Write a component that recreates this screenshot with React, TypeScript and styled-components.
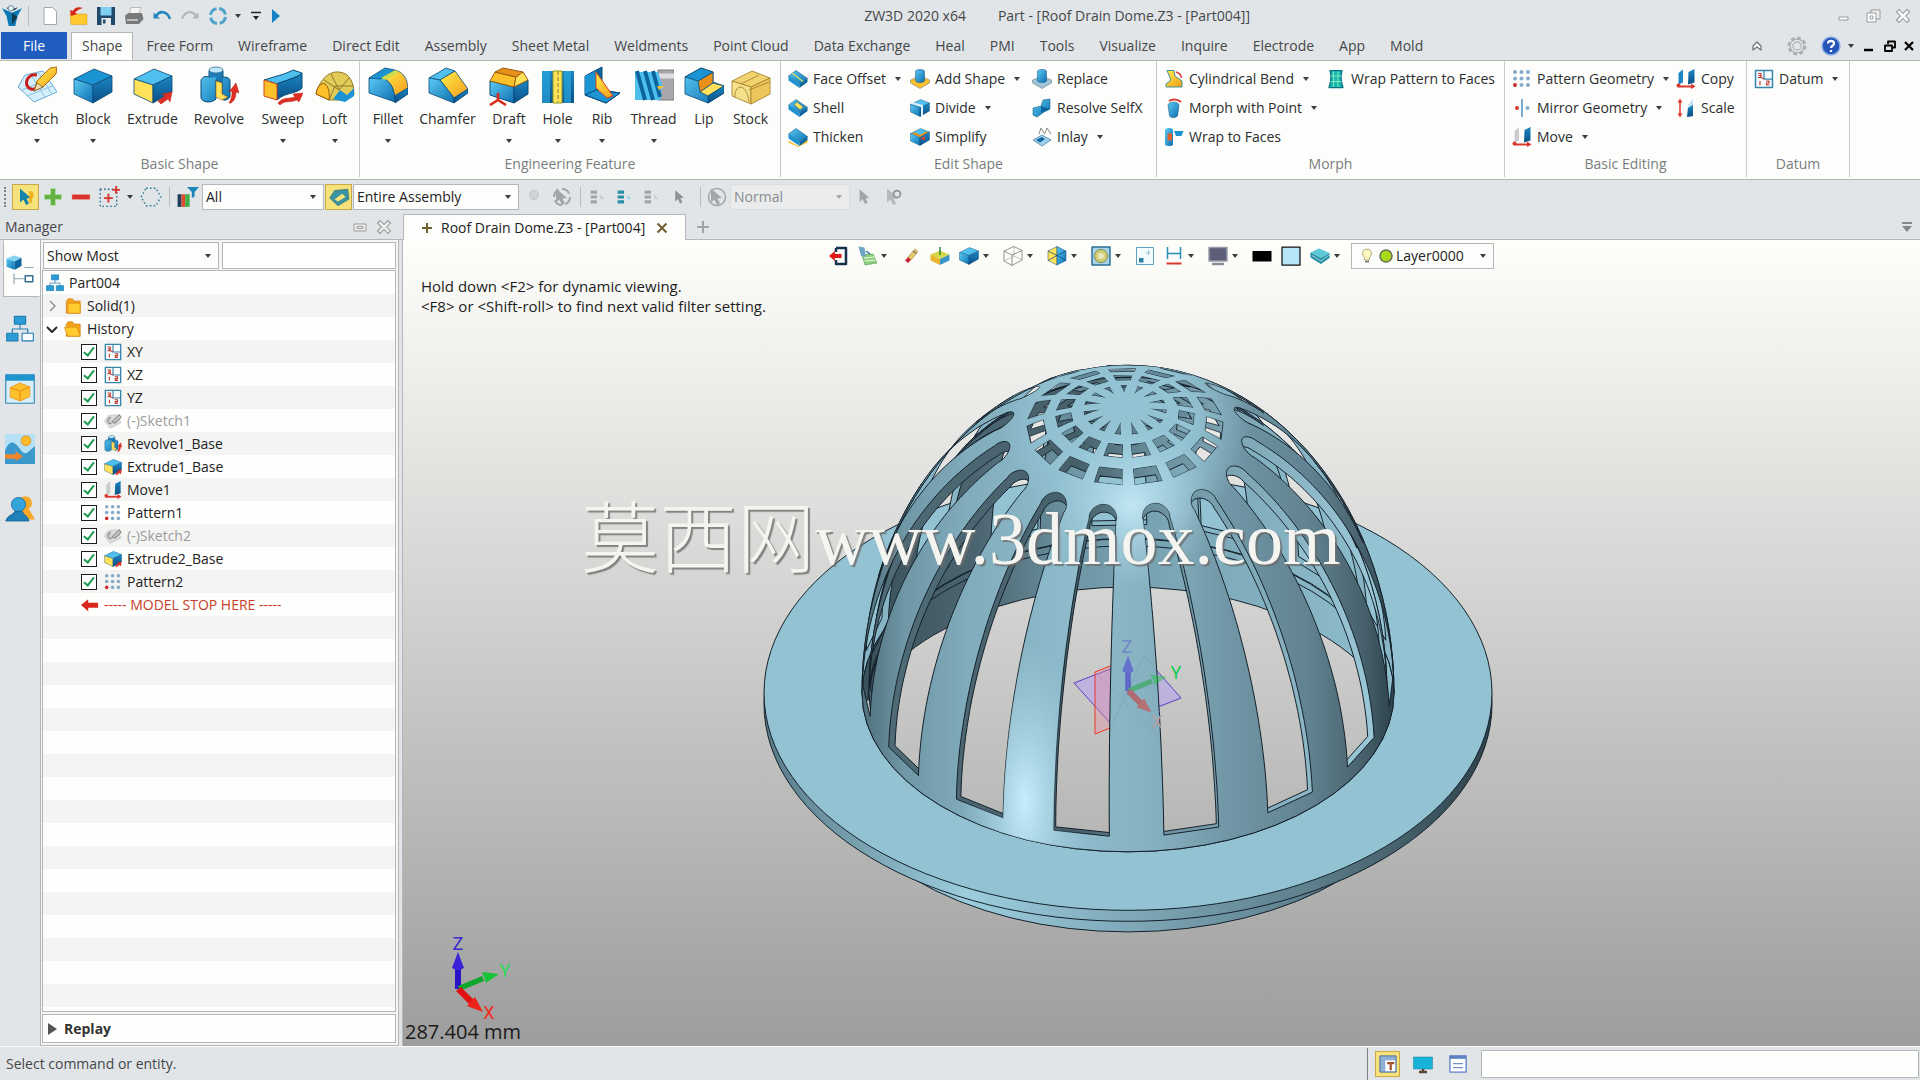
import React from "react";
import styled, { createGlobalStyle, css } from "styled-components";

const UI_FONT = `"Open Sans", "Noto Sans", "Noto Sans CJK SC", sans-serif`;

const GlobalStyle = createGlobalStyle`
  *, *::before, *::after { box-sizing: border-box; }
  body { margin: 0; background: #e2e5e7; color: #2b2d30; font: 14px/20px ${UI_FONT}; }
  button, select, input { font: inherit; color: inherit; }
  button { background: none; border: 0; padding: 0; margin: 0; cursor: pointer; }
`;

/* ---------- shell ---------- */

const Window = styled.div`
  display: flex;
  flex-direction: column;
  height: 100vh;
  background: #e2e5e7;
  overflow: hidden;
`;

const TitleBar = styled.header`
  display: grid;
  grid-template-columns: 859fr auto 666fr;
  align-items: center;
  flex: 0 0 32px;
`;

const QuickAccess = styled.div`
  display: flex;
  align-items: center;
  height: 32px;
`;

const Title = styled.h1`
  display: flex;
  gap: 32px;
  margin: 0;
  font-size: 14px;
  font-weight: 400;
  color: #44474a;
  white-space: nowrap;
`;

const WindowControls = styled.div`
  display: flex;
  justify-content: flex-end;
  gap: 14px;
  padding-right: 9px;
`;

const Cell = styled.button<{ $w: number; $on?: boolean }>`
  display: inline-flex;
  align-items: center;
  justify-content: center;
  flex: none;
  width: ${(p) => p.$w}px;
  height: 26px;
  ${(p) =>
    p.$on &&
    css`
      background: #f6e27a;
      border: 1px solid #c9a84a;
    `}
`;

const Separator = styled.span<{ $after?: number }>`
  flex: none;
  width: 1px;
  height: 20px;
  margin: 0 ${(p) => p.$after ?? 4}px 0 4px;
  background: #b9bcbe;
`;

const ArrowShape = styled.span<{ $dim?: boolean }>`
  display: inline-block;
  flex: none;
  width: 0;
  height: 0;
  border: 3px solid transparent;
  border-top: 4px solid ${(p) => (p.$dim ? "#a5a7a8" : "#3b3d3f")};
  border-bottom: 0;
`;

/* ---------- ribbon ---------- */

const TabRow = styled.nav`
  display: flex;
  flex: 0 0 28px;
  padding-left: 1px;
  border-bottom: 1px solid #b4b7b9;
`;

const FileTab = styled.button`
  width: 66px;
  height: 27px;
  margin-right: 4px;
  background: #1f5dbe;
  color: #fff;
`;

const Tab = styled.button<{ $active?: boolean }>`
  height: 28px;
  margin-right: 1px;
  padding: 0 12px;
  color: #44474a;
  ${(p) =>
    p.$active &&
    css`
      padding: 0 10px;
      background: #fdfefb;
      border: 1px solid #b4b7b9;
      border-bottom-color: #fdfefb;
    `}
`;

const TabTools = styled.div`
  display: flex;
  align-items: center;
  margin-left: auto;
  padding-right: 1px;
`;

const Ribbon = styled.section`
  display: flex;
  flex: 0 0 119px;
  background: #fdfefb;
  border-bottom: 1px solid #b4b7b9;
`;

const Group = styled.section<{ $w: number }>`
  display: flex;
  flex-direction: column;
  justify-content: space-between;
  width: ${(p) => p.$w}px;
  height: 116px;
  border-right: 1px solid #c8cacb;
`;

const GroupName = styled.h2`
  margin: 0;
  padding-bottom: 3px;
  font-size: 14px;
  font-weight: 400;
  text-align: center;
  color: #7a7d80;
`;

const LargeRow = styled.div<{ $pad?: number }>`
  display: flex;
  padding: 5px 0 0 ${(p) => p.$pad ?? 0}px;
`;

const Large = styled.button<{ $w: number }>`
  display: flex;
  flex-direction: column;
  align-items: center;
  width: ${(p) => p.$w}px;
  svg { display: block; }
  span { margin-top: 3px; }
  i { margin-top: 10px; }
`;

const SmallColumns = styled.div<{ $cols: string }>`
  display: grid;
  grid-template-columns: ${(p) => p.$cols};
  padding: 4px 0 0 7px;
`;

const SmallColumn = styled.div`
  display: flex;
  flex-direction: column;
  align-items: flex-start;
`;

const Small = styled.button`
  display: flex;
  align-items: center;
  height: 29px;
  padding-bottom: 2px;
  gap: 5px;
  white-space: nowrap;
  i { margin-left: 4px; }
`;

/* ---------- filter bar ---------- */

const FilterBar = styled.div`
  display: flex;
  align-items: center;
  flex: 0 0 34px;
`;

const Grip = styled.span`
  width: 2px;
  height: 20px;
  margin: 0 6px 0 4px;
  border-left: 2px dotted #7f8284;
`;

const SelectBox = styled.label<{ $w: number; $dim?: boolean; $h?: number }>`
  position: relative;
  display: flex;
  align-items: center;
  flex: none;
  width: ${(p) => p.$w}px;
  height: ${(p) => p.$h ?? 26}px;
  margin: 0 1px;
  background: ${(p) => (p.$dim ? "#e9ebec" : "#fdfefb")};
  border: 1px solid ${(p) => (p.$dim ? "#dcdedf" : "#b4b7b9")};
  color: ${(p) => (p.$dim ? "#8b8d8f" : "#222")};
  > svg { flex: none; margin-left: 4px; }
  > svg:first-child { margin-left: 7px; }
  > i { position: absolute; right: 7px; pointer-events: none; }
`;

const BareSelect = styled.select`
  flex: 1;
  min-width: 0;
  height: 100%;
  padding: 0 18px 0 3px;
  border: 0;
  background: none;
  appearance: none;
  outline: 0;
  opacity: 1;
`;

/* ---------- body ---------- */

const Body = styled.main`
  display: flex;
  flex: 1;
  min-height: 0;
`;

const Manager = styled.aside`
  display: flex;
  flex-direction: column;
  flex: 0 0 402px;
  min-width: 0;
`;

const ManagerHead = styled.div`
  display: flex;
  align-items: center;
  gap: 10px;
  flex: 0 0 25px;
  min-height: 0;
  padding: 0 11px 0 5px;
  h2 { flex: 1; margin: 0; font-size: 14px; font-weight: 400; color: #44474a; }
`;

const ManagerBody = styled.div`
  display: flex;
  flex: 1;
  min-height: 0;
  border-top: 1px solid #b4b7b9;
`;

const SideTabs = styled.nav`
  display: flex;
  flex-direction: column;
  gap: 3px;
  flex: 0 0 40px;
  padding-left: 3px;
`;

const SideTab = styled.button<{ $active?: boolean }>`
  display: flex;
  align-items: center;
  justify-content: center;
  height: 57px;
  padding-right: 4px;
  border: 1px solid transparent;
  ${(p) => p.$active && css`background: #fdfefb; border-color: #fdfefb #fdfefb #b4b7b9 #b4b7b9;`}
`;

const Panel = styled.div`
  display: flex;
  flex-direction: column;
  flex: 1;
  min-width: 0;
  padding: 2px 2px 2px 1px;
  border: 1px solid #b4b7b9;
  border-top: 0;
  background: #f4f5f4;
  margin-right: 3px;
`;

const PanelFilters = styled.div`
  display: flex;
  gap: 2px;
  height: 27px;
  margin-bottom: 1px;
  input { flex: 1; min-width: 0; background: #fff; border: 1px solid #b4b7b9; outline: 0; }
`;

const Tree = styled.ul`
  flex: 1;
  min-height: 0;
  margin: 0;
  padding: 0;
  list-style: none;
  overflow: hidden;
  color: #222;
  border: 1px solid #b4b7b9;
  background: repeating-linear-gradient(#fefefc 0 23px, #f4f4f2 23px 46px);
`;

const TreeRow = styled.li<{ $indent: number; $tone?: string }>`
  display: flex;
  align-items: center;
  gap: 5px;
  height: 23px;
  padding-left: ${(p) => p.$indent}px;
  color: ${(p) => p.$tone ?? "inherit"};
  label { display: flex; align-items: center; gap: 5px; }
  input { margin-right: 2px; }
  svg { flex: none; }
`;

const Check = styled.input`
  appearance: none;
  position: relative;
  width: 16px;
  height: 16px;
  margin: 0;
  background: #fff;
  border: 1px solid #1d1d1d;
  &:checked::after {
    content: "";
    position: absolute;
    left: 4px;
    top: 0;
    width: 6px;
    height: 11px;
    border: solid #1d9a50;
    border-width: 0 2px 2px 0;
    transform: rotate(38deg);
  }
`;

const Replay = styled.button`
  display: flex;
  align-items: center;
  gap: 6px;
  height: 29px;
  margin-top: 2px;
  padding-left: 3px;
  background: #fdfefb;
  border: 1px solid #b4b7b9;
  font-weight: 700;
  color: #333;
`;

const Work = styled.section`
  display: flex;
  flex-direction: column;
  flex: 1;
  min-width: 0;
`;

const DocTabs = styled.div`
  display: flex;
  align-items: center;
  flex: 0 0 26px;
  min-height: 0;
  padding-right: 6px;
  border-bottom: 1px solid #b4b7b9;
`;

const DocTab = styled.div`
  display: flex;
  align-items: center;
  gap: 8px;
  align-self: stretch;
  margin: 0 9px -1px 1px;
  padding: 0 17px 0 17px;
  background: #fdfefb;
  border: 1px solid #b4b7b9;
  border-bottom: 0;
  color: #222;
  button { display: flex; margin-left: 3px; }
`;

const Spacer = styled.span`
  flex: 1;
`;

const Viewport = styled.div`
  position: relative;
  flex: 1;
  min-height: 0;
  border-left: 1px solid #b4b7b9;
  background: linear-gradient(#fefefb, #9d9d9d);
  overflow: hidden;
`;

const Scene = styled.svg`
  position: absolute;
  inset: 0;
  width: 100%;
  height: 100%;
`;

const ViewTools = styled.div`
  position: relative;
  display: flex;
  align-items: center;
  justify-content: center;
  padding: 3px 4px 0 0;
`;

const ViewTool = styled.button<{ $menu?: boolean }>`
  display: flex;
  align-items: center;
  width: ${(p) => (p.$menu ? 44 : 29)}px;
  height: 26px;
  svg { flex: none; margin: 0 4px 0 4px; }
`;

const Hints = styled.p`
  position: relative;
  margin: 7px 0 0 18px;
  font-size: 15px;
  color: #1d1d1d;
`;

const Watermark = styled.div`
  position: absolute;
  left: 178px;
  top: 243px;
  display: flex;
  align-items: flex-start;
  color: #f4f4f0;
  text-shadow: 2px 2px 1px #6d6d6dcc;
  font: 300 78px/100px "Noto Sans CJK SC", sans-serif;
  span { font: 74px/112px "Liberation Serif", serif; }
`;

const Measure = styled.output`
  position: absolute;
  left: 2px;
  bottom: 0;
  font-size: 20px;
  line-height: 28px;
  color: #1a1a1a;
`;

const StatusBar = styled.footer`
  display: flex;
  align-items: center;
  flex: 0 0 34px;
  padding-left: 6px;
  border-top: 1px solid #fafafa;
  color: #44474a;
  > p { flex: 1; margin: 0; }
`;

const StatusTools = styled.div`
  display: flex;
  align-items: center;
  gap: 10px;
  height: 32px;
  padding: 0 11px 0 7px;
  border-left: 1px solid #7d8082;
`;

const CommandLine = styled.input`
  flex: none;
  width: 438px;
  height: 28px;
  margin-right: 1px;
  background: #fdfefb;
  border: 1px solid #b4b7b9;
  outline: 0;
`;

/* ---------- icons ---------- */

const B = { hi: "#4fc0ee", mid: "#1c93d2", lo: "#0d659f", ink: "#0b4a78" };
const Y = { hi: "#ffe25a", mid: "#fbc02a", lo: "#e8901a", ink: "#9b5a10" };

const Svg = ({ s = 20, vb = 40, children }: { s?: number; vb?: number; children: React.ReactNode }) => (
  <svg width={s} height={s} viewBox={`0 0 ${vb} ${vb}`} aria-hidden="true" strokeLinejoin="round">
    {children}
  </svg>
);

const DefsHolder = styled.svg`
  display: block;
  width: 0;
  height: 0;
`;

const Defs = () => (
  <DefsHolder aria-hidden="true">
    <defs>
      <linearGradient id="bl" x1="0" y1="0" x2="1" y2="1">
        <stop offset="0" stopColor="#5ccbf4" />
        <stop offset="1" stopColor="#0c6fb0" />
      </linearGradient>
      <linearGradient id="bd" x1="0" y1="0" x2="0" y2="1">
        <stop offset="0" stopColor="#1b86c4" />
        <stop offset="1" stopColor="#0a4f85" />
      </linearGradient>
      <linearGradient id="go" x1="0" y1="0" x2="1" y2="1">
        <stop offset="0" stopColor="#fff04a" />
        <stop offset="1" stopColor="#f59a1b" />
      </linearGradient>
    </defs>
  </DefsHolder>
);

type Fills = { top?: string; left?: string; right?: string };
const CubeShape = ({ top = B.hi, left = "url(#bl)", right = "url(#bd)" }: Fills) => (
  <g stroke={B.ink} strokeWidth=".8">
    <path d="M1 13 21 3 39 10 20 19Z" fill={top} />
    <path d="M1 13 20 19V37L1 28Z" fill={left} />
    <path d="M20 19 39 10V26L20 37Z" fill={right} />
  </g>
);

const RedArrow = ({ d }: { d: string }) => <path d={d} fill="#e02f22" stroke="#b01d14" strokeWidth=".5" />;

const sketchArt = (
  <>
    <path d="M1 21 8 9 26 5 40 26 17 36Z" fill="#d4eefb" stroke="#6aa9d6" />
    <path d="M5 24 30 14M10 30 35 20M14 9 28 31M22 7 34 27" stroke="#8cc4e6" fill="none" />
    <path d="M20 9C9 7 6 21 14 23 18 24 20 22 22 21" fill="none" stroke="#c81e1e" strokeWidth="3" />
    <path d="M20 15 33 2 40 1 39 8 26 21 17 25Z" fill="url(#go)" stroke="#b06a10" />
    <path d="m17 25 3-8 6 4z" fill="#f8dcb0" stroke="#5a3a14" strokeWidth=".6" />
  </>
);
const extrudeArt = (
  <>
    <CubeShape left={Y.hi} />
    <RedArrow d="M25 35 32 30 29 28 39 26 37 36 35 33 28 38Z" />
  </>
);
const revolveArt = (
  <>
    <path d="M2 14C4 10 8 10 10 11V5C12 1 22 1 24 5V11C28 11 31 12 31 15V31C28 35 23 35 23 32V16L17 14V33C12 38 3 36 2 32Z" fill="url(#bl)" stroke={B.ink} />
    <path d="M10 5C12 8 22 8 24 5V18L17 15V11L10 12Z" fill={B.lo} opacity=".65" />
    <ellipse cx="17" cy="4" rx="7" ry="3" fill="#bfe9fa" stroke={B.ink} strokeWidth=".6" />
    <path d="M17 15 23 17V28L29 31 23 34 17 31Z" fill={Y.hi} stroke={Y.ink} strokeWidth=".6" />
    <RedArrow d="M30 37C33 32 33 29 33 25L30 26 37 17 40 27 37 26C37 32 35 35 32 37Z" />
  </>
);
const sweepArt = (
  <>
    <path d="M1 14 14 10C22 8 26 6 30 4L39 7C38 9 30 12 25 14L14 18Z" fill={B.hi} stroke={B.ink} />
    <path d="M14 18C22 14 36 12 39 7V22C34 28 22 26 14 34Z" fill="url(#bd)" stroke={B.ink} />
    <path d="M1 14 14 18V34L1 30Z" fill={Y.mid} stroke="#d1421c" />
    <RedArrow d="M15 37C20 31 26 33 32 31L30 28 40 27 36 36 34 34C27 37 22 34 17 39Z" />
  </>
);
const loftArt = (
  <>
    <path d="M1 28C4 16 12 5 24 6 35 7 39 17 39 29L30 34H14Z" fill="#e3cb58" stroke="#8d7a2a" />
    <path d="M9 14 24 24 34 12M14 34 20 20 39 20M16 8 24 24" fill="none" stroke="#8d7a2a" />
    <path d="M18 33 25 24 32 29 39 22V30L30 36Z" fill={B.mid} />
    <path d="M1 28C2 20 7 16 10 18 14 21 15 29 14 34Z" fill={Y.mid} stroke={Y.ink} />
  </>
);
const filletArt = (
  <g stroke={B.ink} strokeWidth=".8">
    <path d="M13 13 27 4C35 6 39 12 40 22L26 30C26 22 22 15 13 11Z" fill="url(#go)" />
    <path d="M1 12C16 8 27 16 27 36L1 27Z" fill="url(#bl)" />
    <path d="M27 30 40 22V28L27 37Z" fill="url(#bd)" />
    <path d="M1 12 17 2 27 4 13 13Z" fill={B.mid} />
    <path d="M13 12 27 4 31 6 17 14Z" fill="#c8dc4e" stroke="none" />
  </g>
);
const chamferArt = (
  <g stroke={B.ink} strokeWidth=".8">
    <path d="M1 12 18 2 27 5 12 14Z" fill={B.hi} />
    <path d="M12 14 27 5 40 23 26 32Z" fill="url(#go)" />
    <path d="M1 12 12 14 26 32V37L1 27Z" fill="url(#bl)" />
    <path d="M26 32 40 23V27L26 37Z" fill="url(#bd)" />
  </g>
);
const draftArt = (
  <>
    <path d="M1 15 25 21V37L1 29Z" fill="url(#bl)" stroke={B.ink} />
    <path d="M25 21 39 14V28L25 37Z" fill="url(#bd)" stroke={B.ink} />
    <path d="M1 15 6 6 27 11 25 21Z" fill={Y.mid} stroke={Y.ink} />
    <path d="M6 6 14 2 34 6 27 11Z" fill={Y.lo} stroke={Y.ink} />
    <path d="M25 21 27 11 34 6 39 14Z" fill={Y.hi} stroke={Y.ink} />
    <path d="M9 27V34L1 39M9 34 17 39" fill="none" stroke="#d92a1e" strokeWidth="2.6" />
  </>
);
const holeArt = (
  <>
    <path d="M4 5H36V37H4Z" fill="url(#bd)" />
    <path d="M4 5H12V37H4ZM26 5H33V37H26Z" fill="#2aa6e0" opacity=".7" />
    <path d="M15 5H24V37H15Z" fill={Y.hi} stroke="#8a9a20" />
    <path d="M20 5V36" stroke="#8a7a20" strokeDasharray="4 2" />
  </>
);
const ribArt = (
  <>
    <path d="M3 10 20 1V24L38 27 24 37 3 29Z" fill={B.lo} stroke={B.ink} />
    <path d="M3 10 14 5V24L3 29Z" fill={B.mid} />
    <path d="M14 24 38 27 24 37 3 29Z" fill={B.mid} stroke={B.ink} />
    <path d="M14 6 31 30 25 32 14 22Z" fill="url(#go)" stroke="#d1421c" />
  </>
);
const threadArt = (
  <>
    <path d="M24 4H40V34H24Z" fill="#a8a8ac" stroke="#7d7d80" />
    <path d="M24 10H40" stroke="#dedee0" strokeWidth="5" />
    <path d="M1 6H24L28 18 26 34H1Z" fill={B.hi} />
    <path d="M3 5 11 34M11 5 19 34M19 5 26 31" stroke={B.lo} strokeWidth="4" />
    <path d="M23 20H30L25 24Z" fill={Y.mid} />
  </>
);
const lipArt = (
  <g stroke={B.ink} strokeWidth=".8">
    <path d="M1 11 17 2 29 6V16L40 20V27L24 37 1 28Z" fill="url(#bl)" />
    <path d="M14 15 29 6V17L16 26Z" fill={Y.lo} />
    <path d="M16 26 29 17 40 20 24 30Z" fill={Y.hi} />
    <path d="M24 30 40 20V27L24 37Z" fill="url(#bd)" />
    <path d="M1 11 17 2 29 6 14 15Z" fill={B.mid} />
  </g>
);
const stockArt = (
  <g stroke="#a8842c" strokeWidth=".9" fill="#f1d370">
    <path d="M1 15 21 5 39 12 20 21Z" />
    <path d="M1 15 20 21V38L1 30Z" fill="#f5e08c" />
    <path d="M20 21 39 12V28L20 38Z" fill="#ecc65a" />
    <path d="M4 31C3 18 16 16 18 36M18 24 38 16M10 18 28 9" fill="none" />
  </g>
);
const slab = (extra?: React.ReactNode) => (
  <>
    <path d="M1 14 16 3 39 19 23 30Z" fill="url(#bl)" stroke={B.ink} />
    <path d="M1 14 23 30V38L1 23Z" fill={B.mid} />
    <path d="M23 30 39 19V26L23 38Z" fill={B.lo} />
    {extra}
  </>
);
const pillar = (c: string) => (
  <>
    <path d="M1 22 20 14 39 22V28L20 39 1 28Z" fill={c} stroke="#5f6f78" />
    <path d="M11 4C14 0 26 0 29 4V24C26 28 14 28 11 24Z" fill="url(#bl)" stroke={B.ink} />
  </>
);
const patternArt = (
  <>
    {[6, 19, 32].map((y) => [6, 19, 32].map((x) => (
      <circle key={`${x}-${y}`} cx={x} cy={y} r="4" fill={x === 6 && y === 32 ? "#cf2e2e" : "#86abc9"} />
    )))}
  </>
);
const moveArt = (ghost: string) => (
  <>
    <path d="M5 8 14 1V27L5 31Z" fill={ghost} />
    <path d="M25 6 37 0V27L24 31Z" fill="url(#bd)" />
    <path d="M4 35H32" stroke="#d8392c" strokeWidth="4" />
    <circle cx="5" cy="33" r="4" fill="#d8392c" />
    <path d="m30 29 9 6-9 5z" fill="#d8392c" />
  </>
);
const datumArt = (
  <>
    <path d="M3 3H37V37H3Z" fill="#f5fbff" stroke="#3986ab" strokeWidth="3" />
    <path d="M20 4V20H36" fill="none" stroke="#3986ab" strokeWidth="2.5" />
    <path d="M8 9h6v4h-4 4v4H8M12 24v8M24 24h6v4h-5v4h6M20 20 12 16" fill="none" stroke="#c0392b" strokeWidth="2.4" />
  </>
);
const ghostSketchArt = (
  <>
    <path d="M1 20 10 8 28 6 38 24 14 36Z" fill="#dcdcdc" stroke="#a8a8a8" />
    <path d="M15 12C6 14 6 27 17 26M18 22 34 6 38 12 24 25Z" fill="#c9c9c9" stroke="#8c8c8c" strokeWidth="2.4" />
  </>
);
const folderArt = (open: boolean) => (
  <>
    <path d="M5 10 9 4H19L22 9H36V36H5Z" fill="#f5a31c" stroke="#cf7a10" strokeWidth="1.5" />
    <path d={open ? "M1 16H29L36 36H8Z" : "M9 14H36V36H9Z"} fill="#ffcb2e" stroke="#d98a12" strokeWidth="1.5" />
  </>
);
const orgArt = (last = "#2b9bd6") => (
  <g stroke="#1f7fb5" strokeWidth="1.6">
    <path d="M20 12V20M9 28V20H31V28" fill="none" />
    <path d="M12 2H28V13H12Z" fill="#2b9bd6" />
    <path d="M1 26H17V37H1Z" fill="#2b9bd6" />
    <path d="M23 26H39V37H23Z" fill={last} />
  </g>
);
const cursor = (c: string) => <path d="M8 3 8 31 15 25 20 36 26 33 21 23 30 22Z" fill={c} />;

const Arrow = ({ dim }: { dim?: boolean }) => <ArrowShape as="i" $dim={dim} />;

/* ---------- 3D model ---------- */

const CX = 1128;
const CY = 692;
const SIN = 0.597;
const COS = 0.803;
const RAD = Math.PI / 180;

type Shell = { a: number; h: number };
const OUTER: Shell = { a: 266, h: 357 };
const INNER: Shell = { a: 259, h: 343 };

const project = (s: Shell, lat: number, az: number) => {
  const r = s.a * Math.cos(lat * RAD);
  const z = s.h * Math.sin(lat * RAD);
  const x = CX + r * Math.sin(az * RAD) - (3 * z) / 355;
  const y = CY + r * Math.cos(az * RAD) * SIN - z * COS;
  return `${x.toFixed(1)} ${y.toFixed(1)}`;
};

// Azimuth at which the shell turns away from the viewer at a given latitude.
const horizon = (s: Shell, lat: number) =>
  Math.acos(Math.max(-1, (-Math.tan(lat * RAD) * s.a * SIN) / (s.h * COS))) / RAD;

type Cut = { from: number; to: number; half: (lat: number) => number };

const SLOT: Cut = {
  from: 3,
  to: 64,
  half: (t) => (t < 61 ? 6.1 : 6.4 * Math.sqrt(Math.max(0, 1 - ((t - 61) / 3) ** 2))),
};
const RINGS: Cut[] = [
  { from: 68.3, to: 72.1, half: () => 8.5 },
  { from: 74.8, to: 78.3, half: () => 8 },
  { from: 81, to: 84.6, half: (t) => 4.6 * (1 - (t - 81) / 3.7) },
];

const CENTERS = Array.from({ length: 15 }, (_, i) => {
  const c = 13.9 + 24 * i;
  return c > 180 ? c - 360 : c;
});

const cutPath = (s: Shell, cut: Cut, c: number, front: boolean) => {
  const left: string[] = [];
  const right: string[] = [];
  const steps = 48;
  for (let i = 0; i <= steps; i++) {
    const p = i / steps;
    const t = cut.from + (cut.to - cut.from) * (1 - (1 - p) ** 1.6);
    const w = cut.half(t);
    const lim = horizon(s, t);
    let lo = c - w;
    let hi = c + w;
    if (front) {
      if (lim < 179) {
        lo = Math.max(lo, -lim);
        hi = Math.min(hi, lim);
      }
    } else if (c > 0) lo = Math.max(lo, lim);
    else hi = Math.min(hi, -lim);
    if (hi < lo) continue;
    left.push(project(s, t, lo));
    right.push(project(s, t, hi));
  }
  return left.length < 2 ? "" : `M${left.concat(right.reverse()).join("L")}Z`;
};

const cuts = (s: Shell, front: boolean) =>
  CENTERS.map((c) => (front ? [SLOT, ...RINGS] : [SLOT]).map((k) => cutPath(s, k, c, front)).join("")).join("");

const shellPath = (s: Shell, front: boolean) => {
  const top = Math.hypot(s.a * SIN, s.h * COS);
  return `M${CX - s.a} ${CY}A${s.a} ${top} 0 0 1 ${CX + s.a} ${CY}A${s.a} ${s.a * SIN} 0 0 ${front ? 1 : 0} ${CX - s.a} ${CY}Z${cuts(s, front)}`;
};

const ring = (cy: number, r: number) =>
  `M${CX - r} ${cy}A${r} ${r * SIN} 0 0 0 ${CX + r} ${cy}A${r} ${r * SIN} 0 0 0 ${CX - r} ${cy}Z`;

const outerFront = shellPath(OUTER, true);
const innerFront = shellPath(INNER, true);
const outerBack = shellPath(OUTER, false);
const innerBack = shellPath(INNER, false);
const backArc = (cy: number, r: number) => `M${CX - r} ${cy}A${r} ${r * SIN} 0 0 1 ${CX + r} ${cy}`;

const Triad = ({ x, y, k, faded }: { x: number; y: number; k: number; faded?: boolean }) => (
  <g transform={`translate(${x} ${y}) scale(${k})`} opacity={faded ? 0.45 : 1}>
    <path d="M-3-24H3V0H-3Z" fill="#2a12c8" />
    <path d="M0-37 6-21Q0-17-6-21Z" fill="#3a22d8" />
    <path d="M0-3 24-13 26-8 2 2Z" fill="#0fa62c" />
    <path d="M41-15 24-17 28-6Z" fill="#17c437" />
    <path d="M-2 2 3-2 16 11 11 15Z" fill="#e01212" />
    <path d="M25 23 9 17 17 8Z" fill="#f0231a" />
  </g>
);

const Model = () => (
  <Scene viewBox="403 239 1517 806" preserveAspectRatio="xMidYMid meet" role="img" aria-label="Roof drain dome">
    <defs>
      <linearGradient id="skin" gradientUnits="userSpaceOnUse" x1="862" x2="1394" y1="0" y2="0">
        <stop offset="0" stopColor="#506f7b" />
        <stop offset=".08" stopColor="#6f97a6" />
        <stop offset=".2" stopColor="#81acbc" />
        <stop offset=".4" stopColor="#8ebccc" />
        <stop offset=".55" stopColor="#85b0c0" />
        <stop offset=".68" stopColor="#7298a7" />
        <stop offset=".84" stopColor="#618290" />
        <stop offset=".94" stopColor="#48626d" />
        <stop offset="1" stopColor="#2e434b" />
      </linearGradient>
      <linearGradient id="inside" gradientUnits="userSpaceOnUse" x1="880" x2="1376" y1="0" y2="0">
        <stop offset="0" stopColor="#3c535c" />
        <stop offset=".2" stopColor="#4c6671" />
        <stop offset=".4" stopColor="#6f97a6" />
        <stop offset=".6" stopColor="#7ba7b7" />
        <stop offset="1" stopColor="#8dbccb" />
      </linearGradient>
      <linearGradient id="edge" gradientUnits="userSpaceOnUse" x1="880" x2="1376" y1="0" y2="0">
        <stop offset="0" stopColor="#4f6b76" />
        <stop offset=".4" stopColor="#46606a" />
        <stop offset=".55" stopColor="#6a8f9d" />
        <stop offset="1" stopColor="#9cc9d9" />
      </linearGradient>
      <linearGradient id="rim" gradientUnits="userSpaceOnUse" x1="763" x2="1492" y1="0" y2="0">
        <stop offset="0" stopColor="#587a87" />
        <stop offset=".28" stopColor="#9ccddd" />
        <stop offset=".45" stopColor="#86b1c1" />
        <stop offset=".75" stopColor="#5e7f8c" />
        <stop offset="1" stopColor="#2d4149" />
      </linearGradient>
      <radialGradient id="glowTop" gradientUnits="userSpaceOnUse" cx="1132" cy="504" r="84">
        <stop offset="0" stopColor="#c4e8f5" stopOpacity=".95" />
        <stop offset="1" stopColor="#a5d2e2" stopOpacity="0" />
      </radialGradient>
      <radialGradient id="glowLow" gradientUnits="userSpaceOnUse" cx="0" cy="0" r="1" gradientTransform="translate(1025 800) scale(62 160)">
        <stop offset="0" stopColor="#c6eefd" />
        <stop offset="1" stopColor="#a5d2e2" stopOpacity="0" />
      </radialGradient>
      <radialGradient id="cap" gradientUnits="userSpaceOnUse" cx="1125" cy="420" r="125">
        <stop offset=".5" stopColor="#93c3d3" />
        <stop offset="1" stopColor="#93c3d3" stopOpacity="0" />
      </radialGradient>
      <clipPath id="mouth">
        <ellipse cx={CX} cy={CY} rx={266} ry={266 * SIN} />
      </clipPath>
    </defs>

    <g stroke="#14212b" strokeWidth="1" fillRule="evenodd">
      <path d={ring(750, 303) + ring(CY, 266)} fill="url(#rim)" />
      <path d={ring(703, 364) + ring(CY, 266)} fill="url(#rim)" />
      <path d={ring(CY, 364) + ring(CY, 266)} fill="#93c3d3" />

      <g clipPath="url(#mouth)">
        <path
          d={`M${CX - 266} ${CY}A266 158.8 0 0 1 ${CX + 266} ${CY}L${CX + 275} 750A275 164 0 0 0 ${CX - 275} 750Z`}
          fill="url(#inside)"
        />
        <path d={backArc(CY, 258) + backArc(700, 260)} fill="none" />
      </g>
      <path d={outerBack} fill="#88b5c5" />
      <path d={innerBack} fill="url(#inside)" />
      <ellipse cx="1125" cy="398" rx="76" ry="30" fill="#66899a" stroke="none" />

      <path d="M1074 682 1144 655 1181 697 1112 724Z" fill="#b9a8e8" fillOpacity=".7" stroke="#5c3fc0" />
      <path d="M1095 671 1128 658V720L1095 733Z" fill="#e88c9a" fillOpacity=".35" stroke="#f0352a" />

      <path d={innerFront} fill="url(#edge)" />
      <path d={outerFront} fill="url(#skin)" />
      <g stroke="none">
        <path d={outerFront} fill="url(#cap)" />
        <path d={outerFront} fill="url(#glowTop)" />
        <path d={outerFront} fill="url(#glowLow)" />
      </g>
    </g>

    <g fill="none" strokeWidth="1" opacity=".25">
      <path d="M1112 724 1144 655M1095 671 1161 738M1144 655 1181 697" stroke="#6d7fa8" />
    </g>
    <Triad x={1128} y={690} k={0.95} faded />
    <g fontFamily="Roboto, Arial, sans-serif" fontSize="18" textAnchor="middle">
      <text x="1127" y="652" fill="#7088c4">Z</text>
      <text x="1176" y="678" fill="#12cf4c">Y</text>
      <text x="1157" y="727" fill="#b0a0a8">X</text>
    </g>

    <Triad x={458} y={988} k={1} />
    <g fontFamily="Roboto, Arial, sans-serif" fontSize="18" textAnchor="middle">
      <text x="458" y="949" fill="#3a2ad0">Z</text>
      <text x="505" y="976" fill="#25dc55">Y</text>
      <text x="489" y="1018" fill="#f02a1e">X</text>
    </g>
  </Scene>
);

/* ---------- data ---------- */

const TABS = ["Free Form", "Wireframe", "Direct Edit", "Assembly", "Sheet Metal", "Weldments", "Point Cloud", "Data Exchange", "Heal", "PMI", "Tools", "Visualize", "Inquire", "Electrode", "App", "Mold"];

type LargeItem = [string, number, React.ReactNode, boolean];
const BASIC: LargeItem[] = [
  ["Sketch", 58, sketchArt, true],
  ["Block", 54, <CubeShape key="b" top={B.mid} />, true],
  ["Extrude", 65, extrudeArt, false],
  ["Revolve", 68, revolveArt, false],
  ["Sweep", 60, sweepArt, true],
  ["Loft", 43, loftArt, true],
];
const FEATURE: LargeItem[] = [
  ["Fillet", 56, filletArt, true],
  ["Chamfer", 63, chamferArt, false],
  ["Draft", 60, draftArt, true],
  ["Hole", 37, holeArt, true],
  ["Rib", 52, ribArt, true],
  ["Thread", 51, threadArt, true],
  ["Lip", 50, lipArt, false],
  ["Stock", 43, stockArt, false],
];

type SmallItem = [string, React.ReactNode, boolean?];
const EDIT: SmallItem[][] = [
  [
    ["Face Offset", slab(<path d="M8 8 30 25" stroke="#c9dc6a" strokeWidth="3" />), true],
    ["Shell", slab(<path d="M12 13 18 8 31 18 24 24Z" fill={Y.hi} stroke={B.ink} />)],
    ["Thicken", <g key="t"><path d="M1 27 20 38 39 25V31L20 40 1 31Z" fill={Y.mid} />{slab()}</g>],
  ],
  [
    ["Add Shape", pillar(Y.mid), true],
    ["Divide", <g key="d"><CubeShape /><path d="M1 9 24 16V38" stroke="#dff2fb" strokeWidth="4" fill="none" /></g>, true],
    ["Simplify", <g key="s"><CubeShape /><path d="M6 12 20 18 34 10" stroke={Y.lo} strokeWidth="4" fill="none" /><path d="m20 24 10-6v8z" fill="#e2442c" /></g>],
  ],
  [
    ["Replace", pillar("#9fc4d6")],
    ["Resolve SelfX", <g key="r"><path d="M2 20 18 16 22 4 36 2V22L24 28 10 38 2 34Z" fill="url(#bl)" stroke={B.ink} /><path d="M18 16V30L36 22" fill={B.lo} /></g>],
    ["Inlay", <g key="i"><path d="M2 26 20 16 38 26 20 38Z" fill="#9fd0ea" stroke={B.ink} /><path d="M8 26 20 20 26 24 16 31Z" fill={B.lo} /><path d="M14 14 18 2 25 14 30 2 38 14" fill="none" stroke="#888" strokeWidth="2" /></g>, true],
  ],
];
const MORPH: SmallItem[][] = [
  [
    ["Cylindrical Bend", <g key="c"><path d="M6 3H20L22 14 36 24V36H4V30L14 22Z" fill="url(#go)" stroke="#3f8f9a" strokeWidth="2" /><path d="M24 6C32 8 34 12 35 18" stroke="#d8392c" strokeWidth="3" fill="none" /></g>, true],
    ["Morph with Point", <g key="m"><path d="M8 14C10 6 28 6 30 14L27 36C22 40 14 40 11 36Z" fill="url(#bl)" stroke={B.ink} /><path d="M10 6C18 1 28 3 34 8" stroke="#d8392c" strokeWidth="4" fill="none" /></g>, true],
    ["Wrap to Faces", <g key="w"><path d="M2 5C5 1 15 1 18 5V36C14 39 8 39 2 36Z" fill="url(#bl)" /><path d="M7 13H16V27H7Z" fill="#e2642c" /><path d="M20 8H39L35 18H24Z" fill={B.mid} /></g>],
  ],
  [["Wrap Pattern to Faces", <g key="p"><path d="M8 3H32C29 14 30 26 34 37H6C10 26 11 14 8 3Z" fill="#17b9a8" stroke="#0b6f86" strokeWidth="2.5" /><path d="M15 5V36M24 5V36M9 14H31M9 25H31" stroke="#7ce6c8" strokeWidth="2" /></g>]],
];
const EDITING: SmallItem[][] = [
  [
    ["Pattern Geometry", patternArt, true],
    ["Mirror Geometry", <g key="m"><path d="M20 2V38" stroke="#4a90c2" strokeWidth="3" /><circle cx="10" cy="20" r="4" fill="#d8392c" /><circle cx="31" cy="20" r="4" fill="#86abc9" /></g>, true],
    ["Move", moveArt("#c9cbcd"), true],
  ],
  [
    ["Copy", moveArt("#1c86c4")],
    ["Scale", <g key="s"><path d="M8 6V34" stroke="#d8392c" strokeWidth="3" /><path d="m3 9 5-8 5 8zM3 31l5 8 5-8z" fill="#d8392c" /><path d="M24 14 34 2V36L22 38Z" fill="#c4e0ee" /><path d="M24 20 34 14V36L22 38Z" fill="url(#bd)" /></g>],
  ],
];
const DATUM: SmallItem[][] = [[["Datum", datumArt, true]]];

const HISTORY: [string, React.ReactNode, boolean?][] = [
  ["XY", datumArt],
  ["XZ", datumArt],
  ["YZ", datumArt],
  ["(-)Sketch1", ghostSketchArt, true],
  ["Revolve1_Base", revolveArt],
  ["Extrude1_Base", extrudeArt],
  ["Move1", moveArt("#c9cbcd")],
  ["Pattern1", patternArt],
  ["(-)Sketch2", ghostSketchArt, true],
  ["Extrude2_Base", extrudeArt],
  ["Pattern2", patternArt],
];

const LargeGroup = ({ name, w, pad, items }: { name: string; w: number; pad?: number; items: LargeItem[] }) => (
  <Group $w={w}>
    <LargeRow $pad={pad}>
      {items.map(([label, width, art, menu]) => (
        <Large key={label} $w={width}>
          <Svg s={40}>{art}</Svg>
          <span>{label}</span>
          {menu && <Arrow />}
        </Large>
      ))}
    </LargeRow>
    <GroupName>{name}</GroupName>
  </Group>
);

const SmallGroup = ({ name, w, cols, items }: { name: string; w: number; cols: string; items: SmallItem[][] }) => (
  <Group $w={w}>
    <SmallColumns $cols={cols}>
      {items.map((col) => (
        <SmallColumn key={col[0][0]}>
          {col.map(([label, art, menu]) => (
            <Small key={label}>
              <Svg>{art}</Svg>
              {label}
              {menu && <Arrow />}
            </Small>
          ))}
        </SmallColumn>
      ))}
    </SmallColumns>
    <GroupName>{name}</GroupName>
  </Group>
);

const Picker = ({ label, value, w, h, dim, children }: { label: string; value: string; w: number; h?: number; dim?: boolean; children?: React.ReactNode }) => (
  <SelectBox $w={w} $h={h} $dim={dim}>
    {children}
    <BareSelect aria-label={label} disabled={dim}>
      <option>{value}</option>
    </BareSelect>
    <Arrow dim={dim} />
  </SelectBox>
);

const QUICK: [string, number, React.ReactNode][] = [
  ["New", 28, <path key="n" d="M8 3H25L33 11V37H8Z" fill="#fff" stroke="#a5a8aa" strokeWidth="2" />],
  ["Open", 28, <g key="o"><path d="M4 16H38V37H6Z" fill="#ffc92e" stroke="#d99512" /><path d="M4 14H14L17 18" fill="#ffe07a" /><path d="M30 4C20 0 12 4 10 10L4 8 6 20 19 16 14 13C18 8 24 6 30 4Z" fill="#d8281c" /></g>],
  ["Save", 28, <g key="s"><path d="M2 2H38V38H2Z" fill="#20486b" /><path d="M9 2H31V19H9Z" fill="#7fd0f2" /><path d="M11 24H30V38H11Z" fill="#e6e8ea" /><path d="M14 27H19V35H14Z" fill="#20486b" /></g>],
  ["Print", 28, <g key="p"><path d="M14 3H34L28 20H10Z" fill="#f4f4f4" stroke="#888" /><path d="M2 19 9 14H36L39 26 30 36H4Z" fill="#77797b" /><path d="M6 28H28" stroke="#d5d5d5" strokeWidth="3" /></g>],
  ["Undo", 28, <g key="u"><path d="M8 20C16 8 30 10 36 26" stroke="#2387bd" strokeWidth="5" fill="none" /><path d="M3 13V25H16Z" fill="#2387bd" /></g>],
  ["Redo", 28, <g key="r"><path d="M32 20C24 8 10 10 4 26" stroke="#b3b6b8" strokeWidth="4" fill="none" /><path d="M37 13V25H24Z" fill="#b3b6b8" /></g>],
  ["Regenerate", 28, <circle key="g" cx="20" cy="20" r="15" fill="none" stroke="#4fa2ca" strokeWidth="6" strokeDasharray="18 5.560" strokeDashoffset="-2" />],
];

const VIEW: [string, boolean, React.ReactNode][] = [
  ["Exit", false, <g key="1"><path d="M16 4H36V36H16V28M16 12V4" fill="none" stroke="#16324f" strokeWidth="5" /><path d="M2 20 14 10V16H27V24H14V30Z" fill="#e01a1a" /></g>],
  ["Sheet", true, <g key="2"><path d="M10 18 32 16 40 34 16 38Z" fill="#8fd07c" stroke="#3b8a44" /><path d="M14 24 35 22M15 30 37 28" stroke="#e8f7e0" strokeWidth="2" /><path d="M3 1 15 3 18 22 8 20Z" fill="#6fa5c4" /><path d="M18 10 26 16" stroke="#2f6f96" strokeWidth="3" /></g>],
  ["Erase", false, <g key="3"><path d="M14 22 28 6 34 11 20 28Z" fill="#e8c86a" stroke="#8a6a2a" /><path d="M14 22 20 28 14 34 8 29Z" fill="#c8283c" /><path d="M24 10 31 15" stroke="#777" strokeWidth="3" /></g>],
  ["Orient", false, <g key="4"><path d="M1 17 20 9 39 17 20 26Z" fill="#d6d84a" /><path d="M1 17 20 26V38L1 29Z" fill="#e9b52c" /><path d="M20 26 39 17V29L20 38Z" fill="#3a97c8" /><path d="M20 2V18" stroke="#2c8a3c" strokeWidth="3" /></g>],
  ["Shaded", true, <CubeShape key="5" />],
  ["Wireframe", true, <g key="6" fill="none" stroke="#777a7c" strokeWidth="1.6"><path d="M2 10 22 1 38 9V28L18 39 2 30Z" /><path d="M2 10 18 18 38 9M18 18V39" /><path d="M22 1V20L2 30M22 20 38 28" opacity=".5" /></g>],
  ["Section", true, <g key="7" stroke={B.ink}><path d="M2 10 20 1V38L2 29Z" fill={Y.hi} /><path d="M20 1 38 10V29L20 38Z" fill="url(#bl)" /><path d="M2 10 20 19 38 10M20 19 2 29M20 19 38 29" fill="none" strokeWidth="1.5" /></g>],
  ["Zoom", true, <g key="8"><path d="M2 2H38V38H2Z" fill="#a8d2e6" stroke="#2c6f96" strokeWidth="3" /><circle cx="20" cy="20" r="13" fill="#d6cf78" stroke="#7a8a4a" strokeWidth="2" /><circle cx="20" cy="20" r="6" fill="#e9e8c0" /></g>],
  ["Window", false, <g key="9"><path d="M3 3H37V37H3Z" fill="#f2fafd" stroke="#5f9fc0" strokeWidth="2" /><path d="M8 24H17V33H8Z" fill="#2f7fa8" /><path d="M22 14H32M27 9V19" stroke="#7aa8c0" strokeWidth="2" strokeDasharray="3 2" /></g>],
  ["Measure", true, <g key="a"><path d="M7 2V26M33 2V26M7 15H33" stroke="#2b8db4" strokeWidth="3" /><path d="M5 35H35" stroke="#d8392c" strokeWidth="4" /></g>],
  ["Display", true, <g key="b"><path d="M2 3H38V30H2Z" fill="#5d5f78" stroke="#9a9cab" strokeWidth="3" /><path d="M8 36H32" stroke="#8a8c98" strokeWidth="5" /></g>],
  ["Edge colour", false, <path key="c" d="M1 10H39V31H1Z" fill="#000" />],
  ["Face colour", false, <path key="d" d="M2 2H38V38H2Z" fill="#b5e6f8" stroke="#111" strokeWidth="2.5" />],
  ["Material", true, <g key="e"><path d="M1 13 18 5 39 14 22 24Z" fill="#5cc9d6" /><path d="M1 13V23L22 36 39 24V14L22 24Z" fill="#238ea4" /><path d="M4 19 22 30 38 18" stroke="#d5f2f6" strokeWidth="1.5" fill="none" /></g>],
];

const grey = "#a3a6a8";

export default function App() {
  return (
    <Window>
      <GlobalStyle />
      <Defs />
      <TitleBar>
        <QuickAccess>
          <Cell $w={24} aria-label="ZW3D">
            <Svg s={22}>
              <path d="M2 6 20 14 38 6 30 20 26 38H14L10 20Z" fill="#0d79b4" />
              <path d="M10 4C14 12 26 12 30 4L20 8ZM20 14 30 22 20 36Z" fill="#16384f" />
              <circle cx="18" cy="6" r="5" fill="#dff1f8" stroke="#16384f" />
            </Svg>
          </Cell>
          <Separator $after={7} />
          {QUICK.map(([label, w, art]) => (
            <Cell key={label} $w={w} aria-label={label}>
              <Svg s={20}>{art}</Svg>
            </Cell>
          ))}
          <Cell $w={12} aria-label="Regenerate options"><Arrow /></Cell>
          <Cell $w={24} aria-label="Customize">
            <Svg s={12} vb={12}><path d="M1 2.500H11" stroke="#222" strokeWidth="1.500" /><path d="M3 6H9L6 10Z" fill="#222" /></Svg>
          </Cell>
          <Cell $w={16} aria-label="Next"><Svg s={14} vb={14}><path d="M3 0 11 7 3 14Z" fill="#1583c6" /></Svg></Cell>
        </QuickAccess>
        <Title>
          <span>ZW3D 2020 x64</span>
          <span>Part - [Roof Drain Dome.Z3 - [Part004]]</span>
        </Title>
        <WindowControls>
          <Cell $w={16} aria-label="Minimize"><Svg s={14} vb={14}><path d="M3 8H12V11H3Z" fill="#fff" stroke="#97999b" /></Svg></Cell>
          <Cell $w={16} aria-label="Restore"><Svg s={16} vb={16}><path d="M6 2H15V11H6Z" fill="#eee" stroke="#97999b" /><path d="M2 5H11V14H2Z" fill="#fff" stroke="#97999b" /><path d="M5 8H8V11H5Z" fill="none" stroke="#97999b" /></Svg></Cell>
          <Cell $w={16} aria-label="Close"><Svg s={14} vb={14}><path d="M3 3 11 11M11 3 3 11" stroke="#8f9193" strokeWidth="4.500" strokeLinecap="square" /><path d="M3 3 11 11M11 3 3 11" stroke="#fff" strokeWidth="2.500" strokeLinecap="square" /></Svg></Cell>
        </WindowControls>
      </TitleBar>

      <TabRow>
        <FileTab>File</FileTab>
        <Tab $active>Shape</Tab>
        {TABS.map((t) => <Tab key={t}>{t}</Tab>)}
        <TabTools>
          <Cell $w={40} aria-label="Collapse ribbon"><Svg s={12} vb={12}><path d="M2 6 6 2 10 6V10L6 7 2 10Z" fill="#fff" stroke="#6e7072" strokeWidth="1.200" /></Svg></Cell>
          <Cell $w={40} aria-label="Settings">
            <Svg s={20} vb={20}><circle cx="10" cy="10" r="8" fill="none" stroke="#abaeb0" strokeWidth="3" strokeDasharray="3.700 2.583" /><circle cx="10" cy="10" r="5.500" fill="none" stroke="#abaeb0" strokeWidth="4" /><circle cx="10" cy="10" r="5.500" fill="none" stroke="#e6e8e9" strokeWidth="1.500" /></Svg>
          </Cell>
          <Cell $w={28} aria-label="Help">
            <Svg s={20} vb={20}><circle cx="10" cy="10" r="9" fill="#2456b8" stroke="#8fb0e6" strokeWidth="1.500" /><path d="M7 7.500C7 4 13 4 13 7.500 13 10 10 9.500 10 12M10 14V16" fill="none" stroke="#fff" strokeWidth="2.200" /></Svg>
          </Cell>
          <Cell $w={12} aria-label="Help menu"><Arrow /></Cell>
          <Cell $w={24} aria-label="Minimize part"><Svg s={12} vb={12}><path d="M1 10H10" stroke="#000" strokeWidth="2.500" /></Svg></Cell>
          <Cell $w={18} aria-label="Restore part"><Svg s={12} vb={12}><path d="M4 4V1.500H11V7.500H8.500" fill="none" stroke="#000" strokeWidth="1.800" /><path d="M1 5.500H8V11H1Z" fill="none" stroke="#000" strokeWidth="1.800" /></Svg></Cell>
          <Cell $w={20} aria-label="Close part"><Svg s={12} vb={12}><path d="M2 2 10 10M10 2 2 10" stroke="#000" strokeWidth="2.200" /></Svg></Cell>
        </TabTools>
      </TabRow>

      <Ribbon>
        <LargeGroup name="Basic Shape" w={360} pad={8} items={BASIC} />
        <LargeGroup name="Engineering Feature" w={421} items={FEATURE} />
        <SmallGroup name="Edit Shape" w={376} cols="122px 122px auto" items={EDIT} />
        <SmallGroup name="Morph" w={348} cols="162px auto" items={MORPH} />
        <SmallGroup name="Basic Editing" w={242} cols="164px auto" items={EDITING} />
        <SmallGroup name="Datum" w={103} cols="auto" items={DATUM} />
      </Ribbon>

      <FilterBar>
        <Grip />
        <Cell $w={27} $on aria-label="Pick"><Svg>{cursor("#1583a8")}<path d="M26 8C36 6 38 18 32 24V32H27Z" fill="#f0b21e" /></Svg></Cell>
        <Cell $w={28} aria-label="Add"><Svg><path d="M15 3H25V15H37V25H25V37H15V25H3V15H15Z" fill="#62b244" stroke="#b8dca8" strokeWidth="1.500" /></Svg></Cell>
        <Cell $w={28} aria-label="Remove"><Svg><path d="M2 15H38V25H2Z" fill="#d8332c" stroke="#eaa29e" /></Svg></Cell>
        <Cell $w={28} aria-label="Pick window"><Svg s={22}><path d="M4 6H34V37H4Z" fill="none" stroke="#2b6f96" strokeWidth="2.500" strokeDasharray="3 4" /><path d="M11 22H27M19 14V30M26 7H40M33 0V14" stroke="#d8332c" strokeWidth="3.500" /></Svg></Cell>
        <Cell $w={14} aria-label="Pick window options"><Arrow /></Cell>
        <Cell $w={28} aria-label="Polygon pick"><Svg s={22}><path d="M11 4H29L38 20 29 36H11L2 20Z" fill="none" stroke="#2b7f9f" strokeWidth="2.500" strokeDasharray="3 4" /></Svg></Cell>
        <Separator />
        <Cell $w={27} aria-label="Filter"><Svg s={22}><path d="M1 15H8V38H1Z" fill="#1e3f5c" /><path d="M8 15H15V38H8Z" fill="#e04a2c" /><path d="M15 15H23V38H15Z" fill="#3fae49" /><path d="M18 2H40L32 11V19L27 22V11Z" fill="#1d86b8" /></Svg></Cell>
        <Picker label="Filter type" value="All" w={122} />
        <Cell $w={27} $on aria-label="Scope"><Svg s={22}><path d="M3 22 12 8 36 6 38 24 18 36Z" fill="#3c93a0" stroke="#1e5f70" /><path d="M12 24 26 14 32 20 18 28Z" fill="#f6e27a" /></Svg></Cell>
        <Picker label="Pick scope" value="Entire Assembly" w={166} />
        <Cell $w={28} aria-label="Pick priority"><Svg><circle cx="20" cy="16" r="9" fill="#d0d3d4" stroke="#c2c5c6" strokeWidth="2" /></Svg></Cell>
        <Cell $w={28} aria-label="Cycle pick"><Svg><circle cx="20" cy="20" r="16" fill="none" stroke={grey} strokeWidth="4" strokeDasharray="18 7" />{cursor(grey)}</Svg></Cell>
        <Separator $after={2} />
        {["Align list", "Active list", "Group list"].map((label, i) => (
          <Cell key={label} $w={27} aria-label={label}>
            <Svg s={16}><path d="M4 4H20V12H4ZM4 16H20V24H4ZM4 28H20V36H4Z" fill={i === 1 ? "#2a8fa8" : grey} /><path d="M26 14 38 24 30 26Z" fill={i === 1 ? "#93d4f0" : "#c8cbcc"} /></Svg>
          </Cell>
        ))}
        <Cell $w={32} aria-label="Pointer"><Svg s={16}>{cursor("#8f9193")}</Svg></Cell>
        <Separator />
        <Cell $w={24} aria-label="Pick speed"><Svg><circle cx="20" cy="20" r="17" fill="none" stroke={grey} strokeWidth="3" />{cursor(grey)}</Svg></Cell>
        <Picker label="Mode" value="Normal" w={120} dim />
        <Cell $w={28} aria-label="Select"><Svg s={18}>{cursor(grey)}</Svg></Cell>
        <Cell $w={28} aria-label="Select options"><Svg>{cursor("#b7babb")}<circle cx="28" cy="14" r="7" fill="none" stroke="#8f9193" strokeWidth="3.500" /></Svg></Cell>
      </FilterBar>

      <Body>
        <Manager>
          <ManagerHead>
            <h2>Manager</h2>
            <Cell $w={14} aria-label="Dock"><Svg s={14} vb={14}><path d="M1 4H13V11H1Z" fill="#eee" stroke="#97999b" /><path d="M4 6.500H10V8.500H4Z" fill="none" stroke="#97999b" /></Svg></Cell>
            <Cell $w={14} aria-label="Close manager"><Svg s={14} vb={14}><path d="M3 3 11 11M11 3 3 11" stroke="#8f9193" strokeWidth="4.500" strokeLinecap="square" /><path d="M3 3 11 11M11 3 3 11" stroke="#eee" strokeWidth="2.500" strokeLinecap="square" /></Svg></Cell>
          </ManagerHead>
          <ManagerBody>
            <SideTabs>
              <SideTab $active aria-label="History">
                <Svg s={30}><path d="M2 6 12 2 22 5 13 10Z" fill="#86d3f3" /><path d="M2 6 13 10V21L2 17Z" fill="url(#bl)" /><path d="M13 10 22 5V16L13 21Z" fill={B.lo} /><path d="M26 18H38M12 26V40M12 33H26" stroke="#8fa6b2" strokeWidth="1.500" /><path d="M27 29H37V37H27Z" fill="#fff" stroke="#2f6f96" strokeWidth="2" /></Svg>
              </SideTab>
              <SideTab aria-label="Assembly"><Svg s={28}>{orgArt("#fff")}</Svg></SideTab>
              <SideTab aria-label="Visual">
                <Svg s={30}><path d="M1 1H39V39H1Z" fill="#d9eef8" stroke="#2f86b5" strokeWidth="1.500" /><path d="M1 1H39V9H1Z" fill="#1f95cf" /><path d="M7 18 20 12 33 17V30L20 36 7 31Z" fill={Y.mid} stroke={Y.lo} /><path d="M7 18 20 23 33 17M20 23V36" fill="none" stroke={Y.lo} strokeWidth="1.500" /></Svg>
              </SideTab>
              <SideTab aria-label="Render">
                <Svg s={30}><path d="M0 0H40V40H0Z" fill="#b5e0f6" /><path d="M0 22C6 8 12 8 20 20S32 22 40 16V40H0Z" fill="#3a98cb" /><circle cx="28" cy="9" r="6.500" fill="#fcb92a" stroke="#e08a1a" /><path d="M0 27H14V23L24 30 14 36V33H0Z" fill="#f0862c" /></Svg>
              </SideTab>
              <SideTab aria-label="Role">
                <Svg s={30}><circle cx="27" cy="12" r="9" fill="#f6a928" /><path d="M22 20H32L40 34H20Z" fill="#f6a928" /><circle cx="18" cy="14" r="9.500" fill="#34a5da" stroke="#0e5f92" /><path d="M1 36C4 27 10 29 13 23H23C26 30 30 28 32 36Z" fill="#1f7fb8" stroke="#0e5f92" /></Svg>
              </SideTab>
            </SideTabs>
            <Panel>
              <PanelFilters>
                <Picker label="Show" value="Show Most" w={176} h={27} />
                <input aria-label="Search history" />
              </PanelFilters>
              <Tree>
                <TreeRow $indent={3}><Svg s={18}>{orgArt()}</Svg>Part004</TreeRow>
                <TreeRow $indent={2}>
                  <Svg s={14} vb={14}><path d="M5 2 10 7 5 12" fill="none" stroke="#8f9193" strokeWidth="1.500" /></Svg>
                  <Svg s={18}>{folderArt(false)}</Svg>Solid(1)
                </TreeRow>
                <TreeRow $indent={2}>
                  <Svg s={14} vb={14}><path d="M2 5 7 10 12 5" fill="none" stroke="#222" strokeWidth="1.800" /></Svg>
                  <Svg s={18}>{folderArt(true)}</Svg>History
                </TreeRow>
                {HISTORY.map(([label, art, off]) => (
                  <TreeRow key={label} $indent={38} $tone={off ? "#9a9c9e" : undefined}>
                    <label>
                      <Check type="checkbox" defaultChecked />
                      <Svg s={18}>{art}</Svg>
                      {label}
                    </label>
                  </TreeRow>
                ))}
                <TreeRow $indent={38} $tone="#c8402a">
                  <Svg s={18}><path d="M0 20 16 7V15H38V26H16V34Z" fill="#d8281c" /></Svg>
                  ----- MODEL STOP HERE -----
                </TreeRow>
              </Tree>
              <Replay>
                <Svg s={12} vb={12}><path d="M2 0 11 6 2 12Z" fill="#555" /></Svg>
                Replay
              </Replay>
            </Panel>
          </ManagerBody>
        </Manager>

        <Work>
          <DocTabs>
            <DocTab>
              <Svg s={12} vb={12}><path d="M6 1V11M1 6H11" stroke="#6f5f2e" strokeWidth="2" /></Svg>
              Roof Drain Dome.Z3 - [Part004]
              <button aria-label="Close tab"><Svg s={12} vb={12}><path d="M1.500 1.500 10.500 10.500M10.500 1.500 1.500 10.500" stroke="#6f5f2e" strokeWidth="2" /></Svg></button>
            </DocTab>
            <Cell $w={16} aria-label="New tab"><Svg s={14} vb={14}><path d="M7 1V13M1 7H13" stroke="#a0a2a4" strokeWidth="2" /></Svg></Cell>
            <Spacer />
            <Cell $w={14} aria-label="Tab list"><Svg s={12} vb={12}><path d="M1 2H11" stroke="#85878a" strokeWidth="2" /><path d="M1 5H11L6 11Z" fill="#85878a" /></Svg></Cell>
          </DocTabs>
          <Viewport>
            <Model />
            <ViewTools>
              {VIEW.map(([label, menu, art]) => (
                <ViewTool key={label} $menu={menu} aria-label={label}>
                  <Svg s={20}>{art}</Svg>
                  {menu && <Arrow />}
                </ViewTool>
              ))}
              <Picker label="Layer" value="Layer0000" w={143}>
                <Svg s={16}><path d="M20 3C6 3 7 18 14 24V30H26V24C33 18 34 3 20 3Z" fill="#fdf7c0" stroke="#9a9460" strokeWidth="2" /><path d="M15 34H25" stroke="#777" strokeWidth="4" /></Svg>
                <Svg s={14} vb={14}><circle cx="7" cy="7" r="6" fill="#a9d916" stroke="#6b6f55" strokeWidth="1.500" /></Svg>
              </Picker>
            </ViewTools>
            <Hints>
              Hold down &lt;F2&gt; for dynamic viewing.
              <br />
              &lt;F8&gt; or &lt;Shift-roll&gt; to find next valid filter setting.
            </Hints>
            <Watermark>莫西网<span>www.3dmox.com</span></Watermark>
            <Measure>287.404 mm</Measure>
          </Viewport>
        </Work>
      </Body>

      <StatusBar>
        <p>Select command or entity.</p>
        <StatusTools>
          <Cell $w={25} $on aria-label="Prompt"><Svg s={18}><path d="M2 2H38V38H2Z" fill="#8fb0d6" stroke="#3f64a0" strokeWidth="2" /><path d="M14 12H36V36H14Z" fill="#fff" /><path d="M18 18H34M26 18V34" stroke="#a0522d" strokeWidth="5" /></Svg></Cell>
          <Cell $w={25} aria-label="Output"><Svg><path d="M1 6H39V30H1Z" fill="#19b3d8" stroke="#0f7e9c" /><path d="M20 30V36M12 36H28" stroke="#5a4636" strokeWidth="5" /></Svg></Cell>
          <Cell $w={25} aria-label="Messages"><Svg s={18}><path d="M2 2H38V38H2Z" fill="#fff" stroke="#5b82c4" strokeWidth="3" /><path d="M2 5H38" stroke="#5b82c4" strokeWidth="7" /><path d="M9 19H31M9 28H31" stroke="#6f90c4" strokeWidth="3" /></Svg></Cell>
        </StatusTools>
        <CommandLine aria-label="Command line" />
      </StatusBar>
    </Window>
  );
}
